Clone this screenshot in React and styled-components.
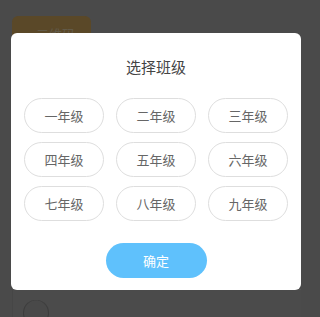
import React, { useState } from 'react'
import styled, { createGlobalStyle } from 'styled-components';

const grades = ['一年级', '二年级', '三年级', '四年级', '五年级', '六年级', '七年级', '八年级', '九年级'];

export default function App() {
  const [picked, setPicked] = useState(null);

  return (
    <>
      <GlobalStyle />
      <Page>
        <TopCard />
        <Tag>二维码</Tag>
        <ListCard>
          <Avatar />
        </ListCard>
      </Page>

      <Mask>
        <Dialog>
          <Title>选择班级</Title>
          <GradeGrid>
            {grades.map((g, i) => (
              <GradeButton key={g} $active={picked === i} onClick={() => setPicked(i)}>
                {g}
              </GradeButton>
            ))}
          </GradeGrid>
          <ConfirmButton>确定</ConfirmButton>
        </Dialog>
      </Mask>
    </>
  )
}

const GlobalStyle = createGlobalStyle`
  html, body {
    margin: 0;
    padding: 0;
    background: #4a4a4a;
    font-family: "Noto Sans CJK SC", "Noto Sans", sans-serif;
  }
`;

const Page = styled.div`
  width: 313px;
  height: 317px;
  overflow: hidden;
  display: flex;
  flex-direction: column;
`;

const TopCard = styled.div`
  margin: 0 13px;
  height: 8px;
  background: #4c4c4c;
  border-radius: 0 0 10px 10px;
  box-shadow: 0 1px 0 #474747;
`;

const Tag = styled.div`
  margin: 16px 0 0 12px;
  width: 79px;
  height: 30px;
  border-radius: 6px;
  background: #5a4828;
  color: #625a48;
  font-size: 13px;
  line-height: 24px;
  padding: 6px 0 0 24px;
  box-sizing: border-box;
`;

const ListCard = styled.div`
  margin: 243px 12px 0 12px;
  height: 40px;
  border-top: 1px solid #535353;
  border-left: 1px solid #464646;
  background: #4b4b4b;
  padding: 10px 0 0 10px;
`;

const Avatar = styled.div`
  width: 26px;
  height: 26px;
  border-radius: 50%;
  background: #494949;
  box-shadow: inset 1px 0 0 #3c3c3c, inset -1px 0 0 #3c3c3c;
`;

const Mask = styled.div`
  position: fixed;
  top: 0;
  left: 0;
  width: 313px;
  height: 317px;
  box-sizing: border-box;
  padding: 33px 0 0 11px;
  display: flex;
  align-items: flex-start;
`;

const Dialog = styled.div`
  width: 290px;
  box-sizing: border-box;
  background: #fff;
  border-radius: 6px;
  padding: 23px 13px 12px;
  display: flex;
  flex-direction: column;
  align-items: center;
`;

const Title = styled.div`
  font-size: 15px;
  line-height: 22px;
  color: #444;
`;

const GradeGrid = styled.div`
  margin-top: 20px;
  width: 100%;
  display: grid;
  grid-template-columns: repeat(3, 1fr);
  column-gap: 12px;
  row-gap: 9px;
`;

const GradeButton = styled.button`
  height: 35px;
  border-radius: 18px;
  border: 1px solid ${p => (p.$active ? '#5fc1fc' : '#dedede')};
  background: #fff;
  color: ${p => (p.$active ? '#5fc1fc' : '#666')};
  font-family: inherit;
  font-size: 13px;
  padding: 0;
  cursor: pointer;
`;

const ConfirmButton = styled.button`
  margin-top: 22px;
  width: 101px;
  height: 35px;
  border: none;
  border-radius: 18px;
  background: #5fc1fc;
  color: #fff;
  font-family: inherit;
  font-size: 13px;
  cursor: pointer;
`;
